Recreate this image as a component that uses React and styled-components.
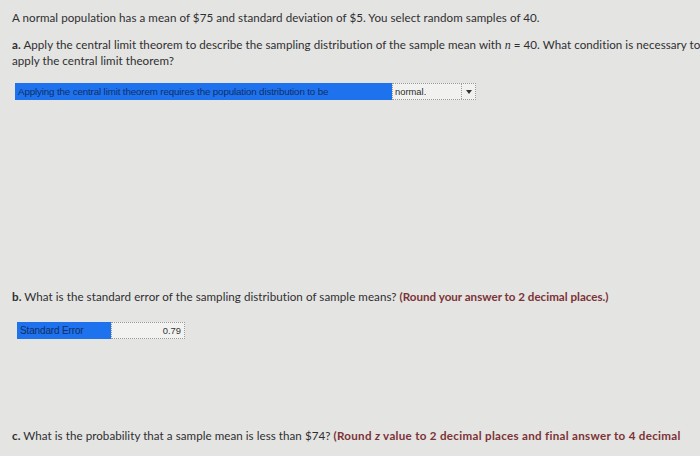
import React from "react";
import styled, { createGlobalStyle } from "styled-components";

const Global = createGlobalStyle`
  html, body { margin: 0; padding: 0; }
  body {
    width: 700px; height: 456px; overflow: hidden;
    background: #e4e4e2;
    font-family: "Lato", "Open Sans", sans-serif;
    color: #2f2f31;
  }
`;

const Page = styled.div`
  padding: 10px 0 0 12px;
  width: 700px;
  box-sizing: border-box;
`;

const Para = styled.p`
  margin: 0;
  font-size: 11.6px;
  line-height: 15px;
  letter-spacing: 0.05px;
  white-space: nowrap;
  margin-top: ${(p) => p.$mt || 0}px;
`;

const Label = styled.b`
  font-weight: 700;
`;

const Hint = styled.b`
  font-weight: 700;
  color: #7c3236;
  letter-spacing: ${(p) => p.$ls || 0}px;
`;

const Var = styled.i`
  font-family: "Liberation Serif", serif;
  font-size: 12px;
`;

const AnswerRow = styled.div`
  display: flex;
  align-items: stretch;
  margin-top: ${(p) => p.$mt}px;
  margin-left: ${(p) => p.$ml}px;
  height: ${(p) => p.$h}px;
`;

const BlueCell = styled.div`
  width: ${(p) => p.$w}px;
  background: #1f72ee;
  color: #0f2f66;
  font-family: "Liberation Sans", Arial, sans-serif;
  font-size: ${(p) => p.$fs}px;
  display: flex;
  align-items: center;
  padding-left: 3px;
  box-sizing: border-box;
  letter-spacing: -0.15px;
  white-space: nowrap;
`;

const Select = styled.div`
  width: 84px;
  background: #f1f1f0;
  border: 1px dotted #9a9a9a;
  box-sizing: border-box;
  display: flex;
  align-items: center;
  font-family: "Liberation Sans", Arial, sans-serif;
  font-size: 9.4px;
  color: #2a2a2a;
`;

const SelectText = styled.span`
  flex: 1;
  padding-left: 2px;
`;

const Arrow = styled.span`
  width: 13px;
  align-self: stretch;
  border-left: 1px dotted #9a9a9a;
  display: flex;
  align-items: center;
  justify-content: center;
`;

const Input = styled.div`
  width: 74px;
  background: #f2f2f1;
  border: 1px dotted #9a9a9a;
  box-sizing: border-box;
  display: flex;
  align-items: center;
  justify-content: flex-end;
  padding-right: 3px;
  font-family: "Liberation Sans", Arial, sans-serif;
  font-size: 9.4px;
  color: #333;
`;

export default function App() {
  return (
    <>
      <Global />
      <Page>
        <Para>
          A normal population has a mean of $75 and standard deviation of $5. You select random samples of 40.
        </Para>
        <Para $mt={12}>
          <Label>a.</Label> Apply the central limit theorem to describe the sampling distribution of the sample mean with <Var>n</Var> = 40. What condition is necessary to
          <br />
          apply the central limit theorem?
        </Para>
        <AnswerRow $mt={15} $ml={3} $h={17}>
          <BlueCell $w={377} $fs={9.8}>Applying the central limit theorem requires the population distribution to be</BlueCell>
          <Select>
            <SelectText>normal.</SelectText>
            <Arrow>
              <svg width="6" height="4" viewBox="0 0 6 4">
                <path d="M0 0 L6 0 L3 4 Z" fill="#333" />
              </svg>
            </Arrow>
          </Select>
        </AnswerRow>
        <Para $mt={189}>
          <Label>b.</Label> What is the standard error of the sampling distribution of sample means? <Hint>(Round your answer to 2 decimal places.)</Hint>
        </Para>
        <AnswerRow $mt={18} $ml={5} $h={17}>
          <BlueCell $w={94} $fs={10}>Standard Error</BlueCell>
          <Input>0.79</Input>
        </AnswerRow>
        <Para $mt={89}>
          <Label>c.</Label> What is the probability that a sample mean is less than $74? <Hint $ls={0.3}>(Round <i>z</i> value to 2 decimal places and final answer to 4 decimal</Hint>
        </Para>
      </Page>
    </>
  );
}
